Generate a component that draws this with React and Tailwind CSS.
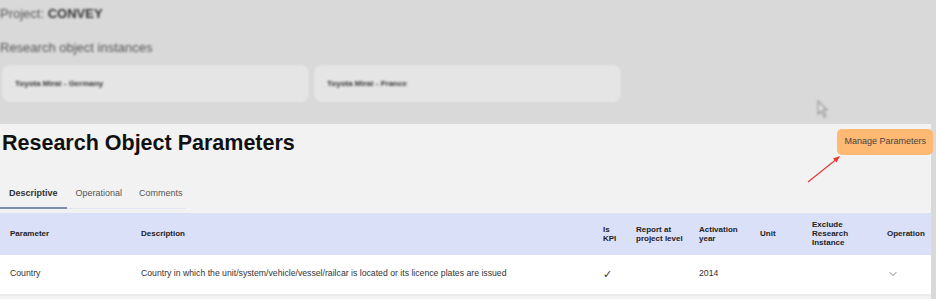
import { ChevronDown } from 'lucide-react';

const columns = [
  { name: 'Parameter', w: 'w-[131px]' },
  { name: 'Description', w: 'w-[462px]' },
  { name: 'Is KPI', w: 'w-[33px]', lines: ['Is', 'KPI'] },
  { name: 'Report at project level', w: 'w-[63px]', lines: ['Report at', 'project level'] },
  { name: 'Activation year', w: 'w-[61px]', lines: ['Activation', 'year'] },
  { name: 'Unit', w: 'w-[52px]' },
  { name: 'Exclude Research Instance', w: 'w-[75px]', lines: ['Exclude', 'Research', 'Instance'] },
  { name: 'Operation', w: 'flex-1' },
];

const instances = ['Toyota Mirai - Germany', 'Toyota Mirai - France'];

export default function App() {
  return (
    <div className="w-[936px] h-[299px] overflow-hidden bg-[#d9d9d9] font-['Liberation_Sans',Arial,sans-serif] text-[#222]">
      {/* Blurred page behind the panel */}
      <div className="relative h-[124px] blur-[1px]">
        <div className="pt-[4px] text-[13px] text-[#555]">
          Project: <span className="font-bold text-[#333]">CONVEY</span>
        </div>
        <div className="mt-[14px] text-[13px] text-[#555]">Research object instances</div>
        <div className="mt-[8px] flex gap-[5px] pl-[2px]">
          {instances.map((name) => (
            <div key={name} className="w-[307px] h-[37px] rounded-[8px] bg-[#e5e5e5] flex items-center pl-[13px] text-[8px] font-bold text-[#333]">
              {name}
            </div>
          ))}
        </div>
        <svg className="absolute left-[816px] top-[100px]" width="14" height="18" viewBox="0 0 14 18">
          <path d="M2 1 L2 14 L5 11 L8 17 L10 16 L7 10 L11 10 Z" fill="#e0e0e0" stroke="#9a9a9a" strokeWidth="1.2" />
        </svg>
      </div>

      {/* Parameters panel */}
      <div className="relative w-[931px] h-[175px] bg-[#f2f2f2]">
        <div className="flex items-start justify-between pt-[5px]">
          <h1 className="pl-[2px] text-[21.5px] leading-[28px] font-bold text-[#111]">Research Object Parameters</h1>
          <button className="mr-[-2px] h-[26px] px-[7px] rounded-[5px] bg-[#ffb972] text-[9px] text-[#444]">
            Manage Parameters
          </button>
        </div>

        <svg className="absolute left-[805px] top-[30px]" width="40" height="32" viewBox="0 0 40 32">
          <line x1="3" y1="28" x2="33" y2="4" stroke="#e53935" strokeWidth="1.2" />
          <path d="M35 2 L28 4.5 L31.5 8.5 Z" fill="#e53935" />
        </svg>

        <div className="mt-[30px] flex text-[9px] border-b border-[#e2e6f3] w-[186px]">
          <div className="px-[9px] pb-[6px] font-bold text-[#333] border-b-2 border-[#7d8db0] -mb-px">Descriptive</div>
          <div className="px-[9px] pb-[6px] text-[#555]">Operational</div>
          <div className="px-[8px] pb-[6px] text-[#555]">Comments</div>
        </div>

        <div className="mt-[4px]">
          <div className="flex items-center h-[42px] bg-[#dae0f8] text-[8px] leading-[9px] font-bold text-[#222]">
            {columns.map((c) => (
              <div key={c.name} className={`${c.w} pl-[10px] shrink-0`}>
                {(c.lines || [c.name]).map((l) => (
                  <div key={l}>{l}</div>
                ))}
              </div>
            ))}
          </div>
          <div className="flex items-center h-[41px] bg-white text-[8.7px] text-[#333] border-b-2 border-[#ebebeb]">
            <div className="w-[131px] pl-[10px] shrink-0">Country</div>
            <div className="w-[462px] pl-[10px] shrink-0">
              Country in which the unit/system/vehicle/vessel/railcar is located or its licence plates are issued
            </div>
            <div className="w-[33px] pl-[10px] shrink-0 text-[11px]">✓</div>
            <div className="w-[63px] pl-[10px] shrink-0"></div>
            <div className="w-[61px] pl-[10px] shrink-0">2014</div>
            <div className="w-[52px] pl-[10px] shrink-0"></div>
            <div className="w-[75px] pl-[10px] shrink-0"></div>
            <div className="flex-1 pl-[10px]">
              <ChevronDown size={12} strokeWidth={1.5} className="text-[#555]" />
            </div>
          </div>
        </div>
      </div>
    </div>
  );
}
